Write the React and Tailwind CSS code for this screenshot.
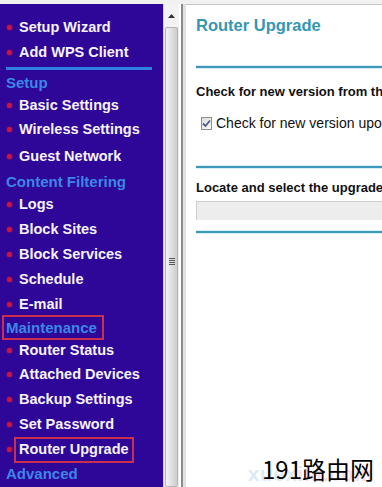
import React from "react";

const navRows = [
  { type: "pad", h: "h-[11px]" },
  { type: "item", label: "Setup Wizard", h: "h-[25px]" },
  { type: "item", label: "Add WPS Client", h: "h-[25px]" },
  { type: "rule", h: "h-[6px]" },
  { type: "head", label: "Setup", h: "h-[22px]" },
  { type: "item", label: "Basic Settings", h: "h-[24px]" },
  { type: "item", label: "Wireless Settings", h: "h-[25px]" },
  { type: "item", label: "Guest Network", h: "h-[28px]" },
  { type: "head", label: "Content Filtering", h: "h-[22px]" },
  { type: "item", label: "Logs", h: "h-[25px]" },
  { type: "item", label: "Block Sites", h: "h-[25px]" },
  { type: "item", label: "Block Services", h: "h-[25px]" },
  { type: "item", label: "Schedule", h: "h-[25px]" },
  { type: "item", label: "E-mail", h: "h-[24px]" },
  { type: "head", label: "Maintenance", h: "h-[22px]", boxed: true },
  { type: "item", label: "Router Status", h: "h-[24px]" },
  { type: "item", label: "Attached Devices", h: "h-[25px]" },
  { type: "item", label: "Backup Settings", h: "h-[25px]" },
  { type: "item", label: "Set Password", h: "h-[25px]" },
  { type: "item", label: "Router Upgrade", h: "h-[25px]", boxed: true },
  { type: "head", label: "Advanced", h: "h-[22px]" },
];

const NavRow = ({ row }) => {
  if (row.type === "pad") return <div className={row.h} />;
  if (row.type === "rule")
    return (
      <div className={`${row.h} flex items-center pl-[6px] pr-[11px]`}>
        <div className="h-[3px] w-full bg-[#2f7fe0]" />
      </div>
    );
  if (row.type === "head")
    return (
      <div className={`${row.h} flex items-center relative`}>
        <span className="pl-[6px] text-[15px] font-bold leading-none text-[#3d86e6] whitespace-nowrap">
          {row.label}
        </span>
        {row.boxed && (
          <div className="absolute left-[2px] top-[-1px] w-[102px] h-[25px] border-2 border-[#c8304e]" />
        )}
      </div>
    );
  return (
    <div className={`${row.h} flex items-center relative`}>
      <span className="ml-[7px] w-[5px] h-[5px] rounded-full bg-[#cc1440] shadow-[0_0_2px_#cc1440]" />
      <span className="ml-[7px] text-[14.5px] font-bold leading-none text-[#f6f3ff] whitespace-nowrap">
        {row.label}
      </span>
      {row.boxed && (
        <div className="absolute left-[14px] top-[0px] w-[120px] h-[26px] border-2 border-[#c8304e]" />
      )}
    </div>
  );
};

const Rule = () => (
  <div className="flex flex-col">
    <div className="h-[1px] bg-[#d6eef7]" />
    <div className="h-[2px] bg-[#3f98ba]" />
    <div className="h-[1px] bg-[#d6eef7]" />
  </div>
);

export default function App() {
  return (
    <div
      className="w-[382px] h-[487px] overflow-hidden bg-white flex flex-col relative"
      style={{ fontFamily: '"Liberation Sans", Arial, sans-serif' }}
    >
      <div className="h-[4px] bg-[#f1f1f1]" />
      <div className="flex-1 flex min-h-0">
        {/* left menu */}
        <div className="w-[163px] bg-[#2e0798] flex flex-col">
          {navRows.map((row, i) => (
            <NavRow key={i} row={row} />
          ))}
        </div>

        {/* scrollbar */}
        <div className="w-[16px] flex flex-col border-l border-[#d9c9ee] bg-[#ececec]">
          <div className="h-[23px] flex items-center justify-center bg-[#f3f3f3]">
            <svg width="7" height="4" viewBox="0 0 7 4">
              <path d="M0 4 L3.5 0 L7 4 Z" fill="#333" />
            </svg>
          </div>
          <div className="flex-1 mx-[1px] rounded-[2px] border border-[#b4b4b4] bg-gradient-to-r from-[#f4f4f4] via-[#e0e0e0] to-[#cdcdcd] flex items-center justify-center">
            <div className="flex flex-col gap-[1px] mt-[8px]">
              <div className="w-[6px] h-[1px] bg-[#555]" />
              <div className="w-[6px] h-[1px] bg-[#555]" />
              <div className="w-[6px] h-[1px] bg-[#555]" />
              <div className="w-[6px] h-[1px] bg-[#555]" />
            </div>
          </div>
        </div>
        <div className="w-[2px] bg-white" />
        <div className="w-[2px] bg-[#8b8b8b]" />
        <div className="w-[3px] bg-[#e2e2e2]" />

        {/* content */}
        <div className="flex-1 min-w-0 flex flex-col border-t border-[#c6c6c6] pl-[10px] overflow-hidden">
          <div className="mt-[10px] text-[16.5px] font-bold leading-[20px] text-[#3497b3] whitespace-nowrap">
            Router Upgrade
          </div>
          <div className="mt-[30px]">
            <Rule />
          </div>
          <div className="mt-[15px] text-[13px] font-bold leading-[16px] text-[#111] whitespace-nowrap">
            Check for new version from the Internet
          </div>
          <div className="mt-[15px] h-[17px] flex items-center whitespace-nowrap">
            <span className="ml-[5px] w-[13px] h-[13px] border border-[#8e8f8f] bg-gradient-to-br from-[#dcdcdc] to-[#fafafa] flex items-center justify-center">
              <svg width="9" height="9" viewBox="0 0 9 9">
                <path d="M1 4.5 L3.5 7 L8 1.5" fill="none" stroke="#4a5d8a" strokeWidth="1.8" />
              </svg>
            </span>
            <span className="ml-[4px] text-[14px] leading-[17px] text-[#111]">
              Check for new version upon log-in
            </span>
          </div>
          <div className="mt-[33px]">
            <Rule />
          </div>
          <div className="mt-[11px] text-[13px] font-bold leading-[16px] text-[#111] whitespace-nowrap">
            Locate and select the upgrade file
          </div>
          <div className="mt-[5px] h-[19px] bg-[#ededed] border-t border-l border-[#cfcfcf]" />
          <div className="mt-[10px]">
            <Rule />
          </div>
        </div>
      </div>

      {/* watermark */}
      <div className="absolute left-[248px] top-[464px] text-[20px] font-bold leading-none tracking-[1px] text-[#b9d6ea] opacity-50 whitespace-nowrap">
        xuex<span className="text-[#eebcd4]">ila.com</span>
      </div>
      <div
        className="absolute left-[262px] top-[455px] text-[24px] leading-[28px] text-black whitespace-nowrap"
        style={{ fontFamily: '"Noto Sans CJK SC", "Noto Sans", sans-serif' }}
      >
        191路由网
      </div>
    </div>
  );
}
